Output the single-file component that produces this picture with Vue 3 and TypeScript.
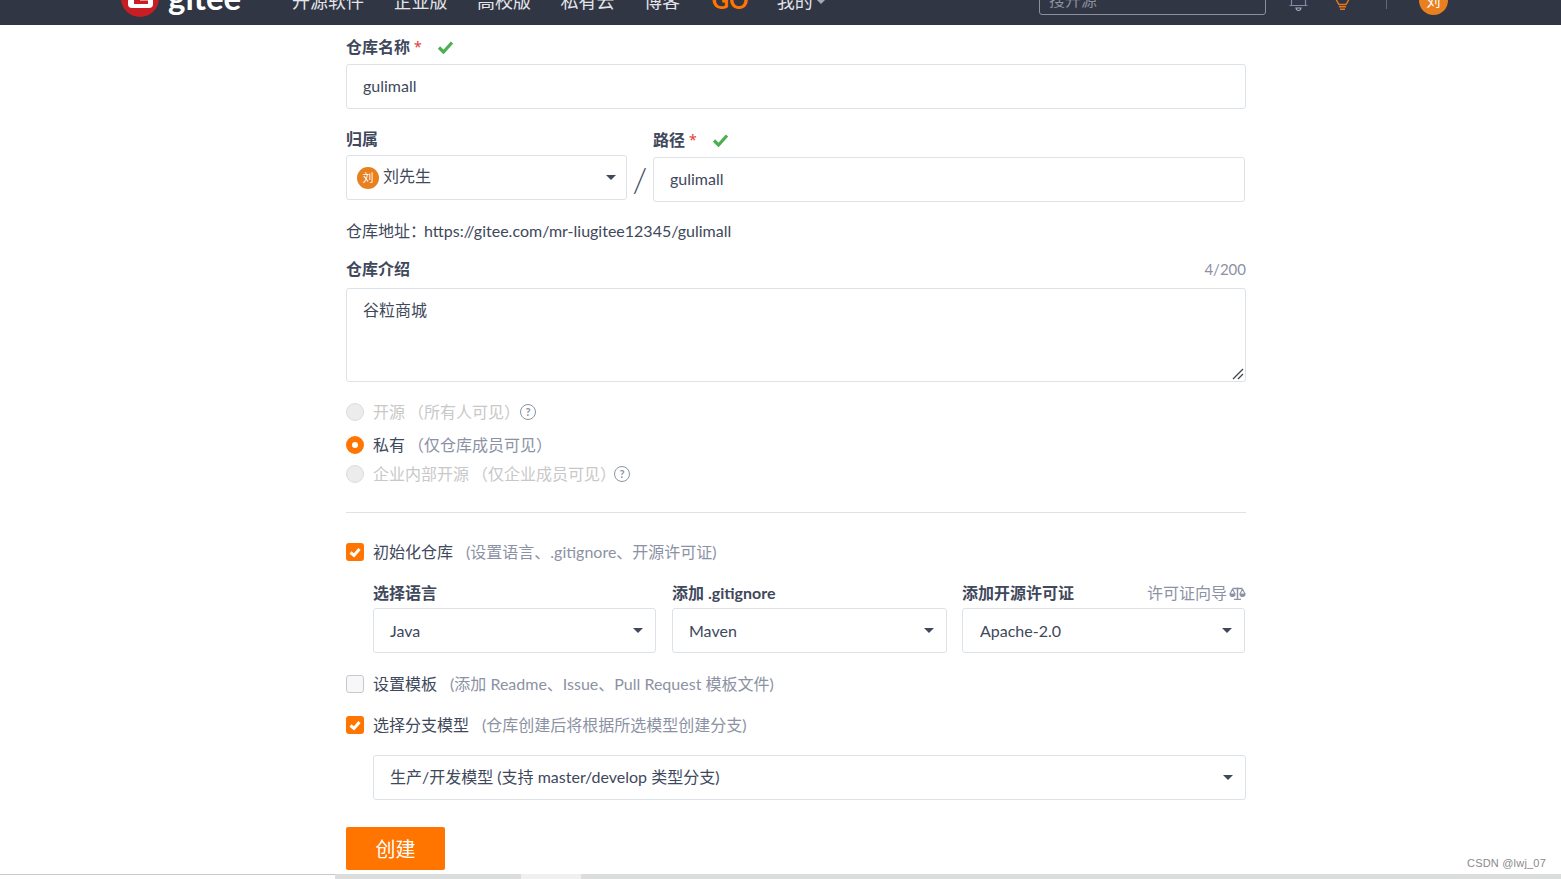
<template>
  <div class="page">
    <header class="nav">
      <div class="nav-inner">
        <div class="logo">
          <svg class="logo-mark" width="38" height="38" viewBox="0 0 38 38">
            <circle cx="19" cy="19" r="19" fill="#c71d23" />
            <rect x="7" y="8" width="25" height="21" rx="4" fill="#fff" />
            <rect x="13" y="14" width="14" height="11" fill="#c71d23" />
            <rect x="19" y="19" width="8" height="2.5" fill="#fff" />
          </svg>
          <span class="logo-text">gitee</span>
        </div>
        <nav class="links">
          <a v-for="l in navLinks" :key="l">{{ l }}</a>
          <a class="go">GO</a>
          <a class="mine">我的<i class="mini-caret"></i></a>
        </nav>
        <div class="search">搜开源</div>
        <svg class="bell" width="20" height="20" viewBox="0 0 20 20" fill="none" stroke="#7f8ba8" stroke-width="1.2">
          <path d="M2.5 1V11M16.5 1V11M0.5 11.5H18.5" />
          <path d="M7 14H12Q11.5 16.5 9.5 16.5T7 14Z" stroke="#a7adbb" />
        </svg>
        <svg class="bulb" width="20" height="20" viewBox="0 0 20 20" fill="none" stroke="#e8751a" stroke-width="1.4">
          <path d="M1 0 Q3 6 6 10.5H13Q16 6 18 0" />
          <path d="M6 12.7H13M7 15.3H12" />
        </svg>
        <span class="sep"></span>
        <span class="nav-avatar">刘</span>
      </div>
    </header>

    <main class="form">
      <div class="label">仓库名称<em>*</em><svg class="ok" viewBox="0 0 16 14"><path d="M1.5 7.5 6 12 14.5 2.5" /></svg></div>
      <input class="field first-field" value="gulimall" readonly />

      <div class="owner-row">
        <div>
          <div class="label">归属</div>
          <div class="select owner-select">
            <span class="avatar">刘</span>
            <span class="owner-name">刘先生</span>
            <i class="caret"></i>
          </div>
        </div>
        <span class="slash">/</span>
        <div class="path-col">
          <div class="label">路径<em>*</em><svg class="ok" viewBox="0 0 16 14"><path d="M1.5 7.5 6 12 14.5 2.5" /></svg></div>
          <input class="field" value="gulimall" readonly />
        </div>
      </div>

      <div class="address">仓库地址：<span class="url">https://gitee.com/mr-liugitee12345/gulimall</span></div>

      <div class="label desc-label">仓库介绍<span class="count">4/200</span></div>
      <div class="area-wrap">
        <textarea class="area" readonly>谷粒商城</textarea>
        <svg class="grip" width="12" height="12" viewBox="0 0 12 12" fill="none" stroke="#444" stroke-width="1.3">
          <path d="M1 11 11 1M6 11 11 6" />
        </svg>
      </div>

      <div class="option disabled r1"><span class="radio"></span>开源<span class="hint gap">（所有人可见）</span><span class="help">?</span></div>
      <div class="option r2"><span class="radio on"></span>私有<span class="hint gap">（仅仓库成员可见）</span></div>
      <div class="option disabled r3"><span class="radio"></span>企业内部开源<span class="hint gap">（仅企业成员可见）</span><span class="help">?</span></div>

      <div class="divider"></div>

      <div class="option c1">
        <span class="check on"><svg viewBox="0 0 18 18"><path d="M4.5 9.5 8 12.5 13.5 6" /></svg></span>初始化仓库<span class="hint pad">(设置语言、.gitignore、开源许可证)</span>
      </div>

      <div class="three">
        <div v-for="s in selects" :key="s.label">
          <div class="label">
            <span>{{ s.label }}</span>
            <span v-if="s.guide" class="guide">
              <span>许可证向导</span>
              <svg width="17" height="13" viewBox="0 0 17 13" fill="none" stroke="#8c92a4" stroke-width="1.1">
                <path d="M8.5 0.5V12M5 12.4H12M3.5 1.6H13.5" stroke-width="1.5" />
                <path d="M3.5 2 1 7M3.5 2 6 7M13.5 2 11 7M13.5 2 16 7" />
                <path d="M1 7H6A2.5 2.5 0 0 1 1 7ZM11 7H16A2.5 2.5 0 0 1 11 7Z" fill="#8c92a4" />
              </svg>
            </span>
          </div>
          <div class="select">{{ s.value }}<i class="caret"></i></div>
        </div>
      </div>

      <div class="option c2"><span class="check"></span>设置模板<span class="hint pad">(添加 Readme、Issue、Pull Request 模板文件)</span></div>
      <div class="option c3">
        <span class="check on"><svg viewBox="0 0 18 18"><path d="M4.5 9.5 8 12.5 13.5 6" /></svg></span>选择分支模型<span class="hint pad">(仓库创建后将根据所选模型创建分支)</span>
      </div>

      <div class="select branch">生产/开发模型 (支持 master/develop 类型分支)<i class="caret"></i></div>

      <button class="create">创建</button>
    </main>

    <div class="scrollbar">
      <span class="sb-left"></span>
      <span class="sb-track"></span>
      <span class="sb-thumb"></span>
      <span class="sb-rest"></span>
    </div>
    <span class="watermark">CSDN @lwj_07</span>
  </div>
</template>

<script setup lang="ts">
const navLinks: string[] = ['开源软件', '企业版', '高校版', '私有云', '博客']

const selects = [
  { label: '选择语言', value: 'Java', guide: false },
  { label: '添加 .gitignore', value: 'Maven', guide: false },
  { label: '添加开源许可证', value: 'Apache-2.0', guide: true },
]
</script>

<style>
html,
body {
  margin: 0;
  overflow: hidden;
  background: #fff;
}
</style>

<style scoped>
.page {
  position: relative;
  display: flex;
  flex-direction: column;
  width: 1561px;
  height: 879px;
  overflow: hidden;
  font-family: Lato, "Noto Sans CJK SC", sans-serif;
  font-size: 16px;
  color: #40485b;
}

/* header is scrolled mostly out of view */
.nav {
  height: 25px;
  flex: none;
  overflow: hidden;
  background: #303643;
}

.nav-inner {
  display: flex;
  align-items: center;
  height: 50px;
  margin-top: -25px;
  padding-left: 121px;
}

.logo {
  display: flex;
  align-items: center;
  width: 171px;
  flex: none;
}

.logo-mark {
  margin-top: -4px;
  flex: none;
}

.logo-text {
  margin-left: 9px;
  margin-top: -6px;
  color: #fff;
  font-size: 33px;
  font-weight: 700;
  line-height: 38px;
}

.links {
  display: flex;
  align-items: center;
  gap: 29.5px;
  width: 747px;
  flex: none;
  font-size: 18px;
}

.links a {
  color: #e3e5ea;
  white-space: nowrap;
}

.links .go {
  margin-left: 2px;
  color: #ff7500;
  font-size: 24px;
  font-weight: 700;
  line-height: 24px;
}

.links .mine {
  margin-left: -1px;
}

.mini-caret {
  display: inline-block;
  margin-left: 4px;
  vertical-align: 4px;
  border: 4px solid transparent;
  border-top-color: #a4a9b5;
  border-bottom: 0;
}

.search {
  box-sizing: border-box;
  width: 227px;
  height: 30px;
  flex: none;
  padding-left: 9px;
  border: 1px solid #8b909c;
  border-radius: 3px;
  color: #8b909c;
  line-height: 28px;
}

/* both icons hang from the top edge of the page */
.bell,
.bulb {
  position: relative;
  top: 4px;
  flex: none;
}

.bell {
  margin-left: 23px;
}

.bulb {
  margin-left: 24px;
}

.sep {
  width: 1px;
  height: 18px;
  margin-left: 33px;
  background: #5c6a8a;
  flex: none;
}

.nav-avatar {
  width: 29px;
  height: 29px;
  margin-left: 32px;
  border-radius: 50%;
  background: #e8801f;
  color: #fff;
  font-size: 14px;
  line-height: 29px;
  text-align: center;
  flex: none;
}

.form {
  flex: 1;
  width: 900px;
  margin-left: 346px;
  padding-top: 11px;
}

.label {
  display: flex;
  align-items: center;
  height: 22px;
  font-weight: 700;
  line-height: 22px;
  white-space: pre;
}

.label em {
  margin-left: 4px;
  color: #e53935;
  font-family: "Noto Sans", sans-serif;
  font-style: normal;
  font-weight: 400;
  font-size: 14px;
}

.ok {
  width: 17px;
  height: 14px;
  margin-left: 15px;
  fill: none;
  stroke: #4caf50;
  stroke-width: 3.2;
}

.field {
  display: block;
  box-sizing: border-box;
  width: 100%;
  height: 45px;
  padding: 0 16px 2px;
  border: 1px solid #dce3e8;
  border-radius: 3px;
  outline: none;
  background: #fff;
  color: #40485b;
  font: inherit;
}

.first-field {
  margin-top: 6px;
}

.owner-row {
  display: grid;
  grid-template-columns: 281px 26px 592px;
  margin-top: 19px;
}

.path-col {
  padding-top: 1px;
}

.path-col .field {
  margin-top: 6px;
}

.slash {
  margin-top: 29px;
  font-size: 34px;
  font-weight: 300;
  line-height: 44px;
  text-align: center;
}

.select {
  position: relative;
  box-sizing: border-box;
  height: 45px;
  margin-top: 4px;
  padding: 0 16px;
  border: 1px solid #dce3e8;
  border-radius: 3px;
  line-height: 43px;
  white-space: nowrap;
}

.owner-select {
  display: flex;
  align-items: center;
  margin-top: 5px;
  padding-left: 10px;
}

.owner-select .caret {
  right: 10px;
}

.avatar {
  width: 22px;
  height: 22px;
  border-radius: 50%;
  background: #e8801f;
  color: #fff;
  font-size: 11px;
  line-height: 22px;
  text-align: center;
}

.owner-name {
  margin-left: 4px;
  margin-top: -4px;
}

.caret {
  position: absolute;
  top: 19px;
  right: 12px;
  border: 5px solid transparent;
  border-top-color: #40485b;
  border-bottom: 0;
}

.address {
  height: 22px;
  margin-top: 18px;
  line-height: 22px;
}

.url {
  margin-left: -2px;
}

.desc-label {
  justify-content: space-between;
  margin-top: 16px;
}

.count {
  color: #8c92a4;
  font-size: 15px;
  font-weight: 400;
}

.area-wrap {
  position: relative;
  margin-top: 8px;
}

.area {
  display: block;
  box-sizing: border-box;
  width: 100%;
  height: 94px;
  padding: 10px 16px;
  border: 1px solid #dce3e8;
  border-radius: 3px;
  outline: none;
  resize: none;
  color: #40485b;
  font: inherit;
  line-height: 22px;
}

.grip {
  position: absolute;
  right: 2px;
  bottom: 2px;
}

.option {
  display: flex;
  align-items: center;
  height: 22px;
  line-height: 22px;
  white-space: pre;
}

.r1 { margin-top: 19px; }
.r2 { margin-top: 11px; }
.r3 { margin-top: 7px; }
.c1 { margin-top: 28px; }
.c2 { margin-top: 20px; }
.c3 { margin-top: 19px; }

.radio,
.check {
  box-sizing: border-box;
  width: 18px;
  height: 18px;
  margin-right: 9px;
  flex: none;
}

.radio {
  border: 1px solid #dcdcdc;
  border-radius: 50%;
  background: #ececec;
}

.radio.on {
  border: 6px solid #ff7500;
  background: #fff;
}

.check {
  border: 1px solid #c4c8d0;
  border-radius: 3px;
  background: #f7f7f7;
}

.check.on {
  border: 0;
  background: #ff7500;
}

.check svg {
  display: block;
  fill: none;
  stroke: #fff;
  stroke-width: 3;
}

.hint {
  color: #8c92a4;
}

.hint.gap {
  margin-left: 3px;
}

.hint.pad {
  margin-left: 13px;
}

.disabled,
.disabled .hint {
  color: #c8c8c8;
}

.help {
  box-sizing: border-box;
  width: 16px;
  height: 16px;
  border: 1.5px solid #8c92a4;
  border-radius: 50%;
  color: #8c92a4;
  font-size: 11px;
  font-weight: 700;
  line-height: 13px;
  text-align: center;
}

.r3 .help {
  margin-left: -2px;
}

.divider {
  height: 1px;
  margin-top: 27px;
  background: #dce3e8;
}

.three {
  display: grid;
  grid-template-columns: 283px 275px 283px;
  column-gap: 16px;
  width: 873px;
  margin: 19px 0 0 27px;
}

.three > div:nth-child(3) {
  margin: 0 1px 0 -1px;
}

.three > div:nth-child(3) .select {
  padding-left: 17px;
}

.guide {
  display: flex;
  align-items: center;
  gap: 2px;
  margin-left: auto;
  margin-right: -1px;
  color: #8c92a4;
  font-weight: 400;
}

.branch {
  margin: 19px 0 0 27px;
  line-height: 42px;
}

.create {
  display: block;
  width: 99px;
  height: 43px;
  margin-top: 27px;
  padding: 0;
  border: 0;
  border-radius: 2px;
  background: #ff7500;
  color: #fff;
  font: inherit;
  font-size: 20px;
}

.scrollbar {
  display: flex;
  height: 5px;
  flex: none;
}

.sb-left {
  width: 335px;
  box-sizing: border-box;
  border-top: 1px solid #c8c8c8;
}

.sb-track {
  width: 186px;
  background: #dcdedd;
}

.sb-thumb {
  width: 60px;
  background: #f0f0f0;
}

.sb-rest {
  flex: 1;
  background: #dcdedd;
}

.watermark {
  position: absolute;
  right: 15px;
  bottom: 9px;
  color: #8a8a8a;
  font-family: "Liberation Sans", sans-serif;
  font-size: 11px;
  letter-spacing: 0.2px;
  line-height: 14px;
}
</style>
